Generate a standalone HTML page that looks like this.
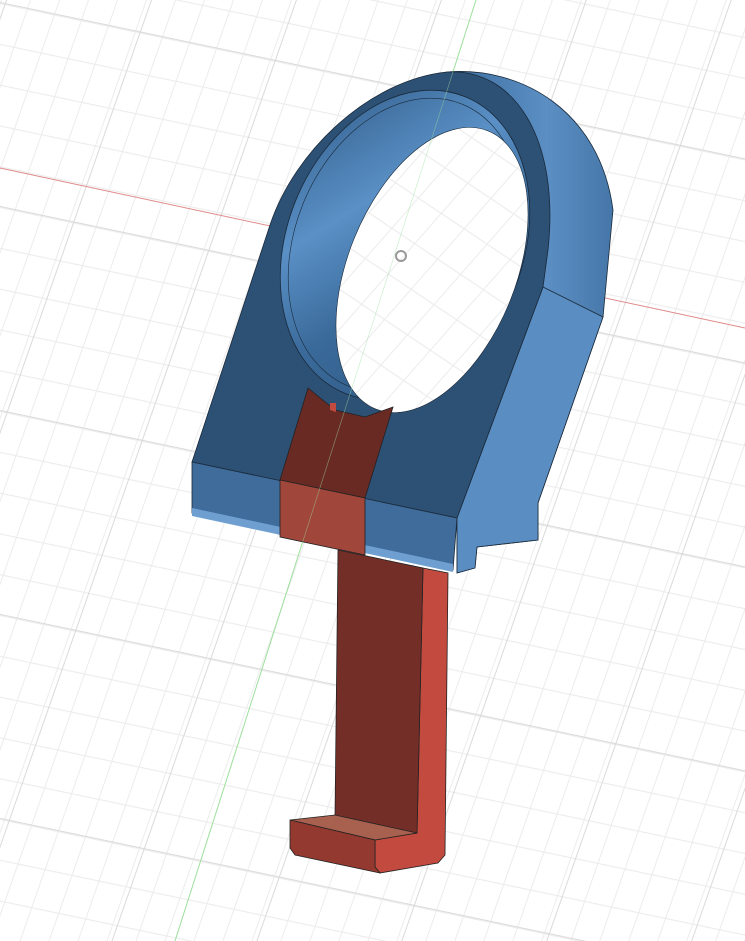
<!DOCTYPE html>
<html><head><meta charset="utf-8"><style>html,body{margin:0;padding:0;background:#fff}svg{display:block}</style></head>
<body>
<svg width="745" height="941" viewBox="0 0 745 941" xmlns="http://www.w3.org/2000/svg">
<defs>
<pattern id="g" width="27" height="38" patternUnits="userSpaceOnUse" patternTransform="matrix(1,0.21,-0.35,1,0,3)">
<path d="M0 0.5H27M0.5 0V38" stroke="#ececec" stroke-width="1" fill="none"/>
</pattern>
<pattern id="G" width="135" height="190" patternUnits="userSpaceOnUse" patternTransform="matrix(1,0.21,-0.35,1,5,3)">
<path d="M0 0.5H135M0.5 0V190" stroke="#dadada" stroke-width="1" fill="none"/>
</pattern>
<linearGradient id="ring" x1="0" y1="0" x2="1" y2="1">
<stop offset="0" stop-color="#2f5a86"/><stop offset="0.35" stop-color="#5a90c6"/><stop offset="0.6" stop-color="#3a6a9a"/><stop offset="1" stop-color="#2d5580"/>
</linearGradient>
<linearGradient id="band" x1="0" y1="0" x2="1" y2="0">
<stop offset="0" stop-color="#3d6d9e"/><stop offset="0.6" stop-color="#5b8fc4"/><stop offset="1" stop-color="#4676a8"/>
</linearGradient>
</defs>
<rect width="745" height="941" fill="#fff"/>
<rect width="745" height="941" fill="url(#g)"/>
<rect width="745" height="941" fill="url(#G)"/>
<line x1="0" y1="168" x2="745" y2="328" stroke="#e08a8a" stroke-width="1"/>
<line x1="476" y1="0" x2="175" y2="941" stroke="#9ee09e" stroke-width="1"/>

<!-- stem -->
<polygon points="423,568 448,573 445,855 438,863 380,873 375,867 375,840 417,833" fill="#c24a3e" stroke="#222" stroke-width="0.8"/>
<polygon points="338,550 423,568 417,833 335,817" fill="#742e28" stroke="#222" stroke-width="0.8"/>
<polygon points="290,820 335,815 417,833 375,840" fill="#a8604f" stroke="#222" stroke-width="0.8"/>
<polygon points="290,820 375,840 375,867 380,873 295,855 290,848" fill="#93392f" stroke="#222" stroke-width="0.8"/>

<!-- side band -->
<path d="M447,72 C520,66 600,110 613,210 L603,317 L538,503 L538,540 L477,547 L475,568 L457,573 L457,518 L543,287 Z" fill="url(#band)" stroke="#1a2a3a" stroke-width="0.8"/>
<polygon points="543,287 603,317 538,503 538,540 477,547 475,568 457,573 457,518" fill="#5a8dc2" stroke="#1a2a3a" stroke-width="0.8"/>
<!-- front face -->
<path d="M192,462 L270,225 C295,150 370,80 447,72 C515,68 560,140 548,250 L543,287 L457,518 Z" fill="#2d5075" stroke="#1a2a3a" stroke-width="0.8"/>
<!-- bottom front bar -->
<polygon points="192,462 457,518 453,570 192,513" fill="#3f6c9b" stroke="#1a2a3a" stroke-width="0.8"/>
<polygon points="192,508 453,564 453,572 192,516" fill="#6f9fd0"/>
<!-- ring inner surface -->
<ellipse cx="405" cy="245" rx="118" ry="160" transform="rotate(22 405 245)" fill="url(#ring)" stroke="#1a2a3a" stroke-width="0.8"/>
<ellipse cx="405" cy="245" rx="110" ry="152" transform="rotate(22 405 245)" fill="none" stroke="#1a2a3a" stroke-width="0.6"/>
<!-- hole -->
<ellipse cx="432" cy="270" rx="84" ry="150" transform="rotate(22 432 270)" fill="#fff"/>
<ellipse cx="432" cy="270" rx="84" ry="150" transform="rotate(22 432 270)" fill="url(#g)" stroke="#1a2a3a" stroke-width="0.6"/>
<!-- red middle -->
<polygon points="308,388 335,410 365,417 393,407 365,498 280,480" fill="#6a2a24" stroke="#222" stroke-width="0.8"/>
<polygon points="280,480 365,498 365,555 280,537" fill="#a0463a" stroke="#222" stroke-width="0.8"/>
<polygon points="330,403 336,403 336,412 330,410" fill="#c24a3e"/>
<line x1="476" y1="0" x2="175" y2="941" stroke="#9ee09e" stroke-width="0.6" opacity="0.6"/>
<circle cx="401" cy="256" r="5" fill="none" stroke="#999" stroke-width="2"/>
</svg>
</body></html>
